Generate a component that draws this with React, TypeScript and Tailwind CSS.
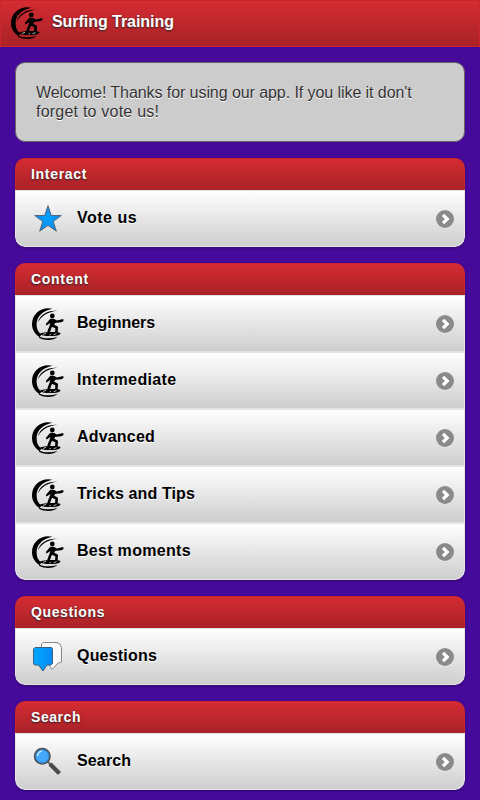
import React from "react";

const SurferIcon = () => (
  <svg viewBox="0 0 32 32" className="w-8 h-8 shrink-0" fill="#000">
    {/* wave */}
    <path d="M20.500 .8C10 -1.800 0 5.500 0 16c0 6 3.200 10.500 7.500 13l2-2.300C6.300 24.500 4.600 21 4.600 16.500 4.600 8.500 10.500 3 20.500 .8z" />
    <path d="M25.500 2.800C15.500 2 8 6.500 5.800 14.500 9.500 8 15.500 4 25.500 2.800z" />
    <path d="M7 28.500c5 2.400 12 2.300 18.500.6-4 3.500-12.500 3.900-18.500.6z" />
    {/* board */}
    <path d="M7.500 25.800c3-2 17.500-2.700 21-.8.300 2.700-6 3.200-11 3.100-4.300 0-8.500-.6-10-2.300z" />
    <path d="M11 26.500l3-1.200M21.500 26.800l3-1.200M17.500 27l1.500-.6" stroke="#ddd" strokeWidth=".8" />
    {/* rider */}
    <circle cx="20.300" cy="8" r="2.400" />
    <path d="M18.300 10.800l4 .2 2.500 1.400 6.400-1.300.4 1.800-2.300 1.400-5 .4-1.200.3-1.800 3.800-3.800-.3.800-3.400-3.700 2.300-.8-1.400z" />
    <path
      d="M19.500 17.200l-1.700 3.300-1.500 4.500M20 17.300l4.700 2.200-.4 5.500"
      fill="none"
      stroke="#000"
      strokeWidth="2.600"
      strokeLinejoin="round"
    />
  </svg>
);

const StarIcon = () => (
  <svg viewBox="0 0 32 32" className="w-8 h-8 shrink-0">
    <defs>
      <radialGradient id="star">
        <stop offset="0" stopColor="#00a2ff" />
        <stop offset="1" stopColor="#168bed" />
      </radialGradient>
    </defs>
    <path
      d="M16 2.700l3.300 9.800h10l-8.100 6.100 3.200 9.600-8.400-5.900-8.300 5.900 3.100-9.600-8.100-6.100h10z"
      fill="url(#star)"
      stroke="#4c5d6c"
      strokeWidth=".9"
    />
  </svg>
);

const ChatIcon = () => (
  <svg viewBox="0 0 32 32" className="w-8 h-8 shrink-0" strokeWidth="1">
    <defs>
      <linearGradient id="chat">
        <stop offset="0" stopColor="#00a8ff" />
        <stop offset="1" stopColor="#0789f4" />
      </linearGradient>
    </defs>
    <path
      d="M11 1.500h14q4 1 4.500 5v14.500l-4 1.500-5.500 6-3.500-5.500h-6l-1-2v-18z"
      fill="#f9f9f9"
      stroke="#888"
    />
    <path
      d="M3 6.500h16.500l1 1.500v14.500l-1.500 1.500h-4l-4 6-4.500-6h-4l-1-1.500v-14.500z"
      fill="url(#chat)"
      stroke="#39607e"
    />
  </svg>
);

const SearchIcon = () => (
  <svg viewBox="0 0 32 32" className="w-8 h-8 shrink-0">
    <path d="M14.500 14.500l4.500 4.500" stroke="#666" strokeWidth="2" />
    <path d="M18 18l9.500 9.500" stroke="#4b4b4b" strokeWidth="4.200" />
    <circle cx="10.300" cy="10.300" r="7.700" fill="#43a8fb" stroke="#4b5055" strokeWidth="1.600" />
    <circle cx="10.300" cy="10.300" r="6.500" fill="none" stroke="#2a83d3" strokeWidth=".8" />
    <path d="M5.500 10c.2-2.700 2-4.500 4.500-5" stroke="#c5e6ff" strokeWidth="1.500" fill="none" />
  </svg>
);

const ArrowIcon = () => (
  <svg viewBox="0 0 20 20" className="w-5 h-5 shrink-0">
    <circle cx="10" cy="10.600" r="9" fill="#fff" fillOpacity=".5" />
    <circle cx="10" cy="10" r="9" fill="#8a8a8a" />
    <path d="M8 5.800l4.200 4.200-4.200 4.200" fill="none" stroke="#fff" strokeWidth="3.300" />
  </svg>
);

const sections = [
  {
    title: "Interact",
    spacing: "tracking-[0.7px]",
    items: [{ label: "Vote us", Icon: StarIcon, spacing: "tracking-[0.5px]" }],
  },
  {
    title: "Content",
    spacing: "tracking-[0.7px]",
    items: [
      { label: "Beginners", Icon: SurferIcon, spacing: "tracking-[0px]" },
      { label: "Intermediate", Icon: SurferIcon, spacing: "tracking-[0.37px]" },
      { label: "Advanced", Icon: SurferIcon, spacing: "tracking-[0.18px]" },
      { label: "Tricks and Tips", Icon: SurferIcon, spacing: "tracking-[0.12px]" },
      { label: "Best moments", Icon: SurferIcon, spacing: "tracking-[0.3px]" },
    ],
  },
  {
    title: "Questions",
    spacing: "tracking-[0.63px]",
    items: [{ label: "Questions", Icon: ChatIcon, spacing: "tracking-[0.2px]" }],
  },
  {
    title: "Search",
    spacing: "tracking-[0.55px]",
    items: [{ label: "Search", Icon: SearchIcon, spacing: "tracking-[0.15px]" }],
  },
];

const Section = ({ title, spacing, items }) => (
  <section className="rounded-[10px] overflow-hidden shadow-[0_1px_3px_rgba(0,0,0,0.3)]">
    <h2
      className={`h-8 pl-[15px] text-sm leading-[30px] font-bold text-white bg-linear-to-b from-[#d42c32] to-[#a92227] [text-shadow:0_1px_2px_#222] border border-b-0 border-[#c8262c] ${spacing}`}
    >
      {title}
    </h2>
    <ul className="border-x border-[#e6e6e6] rounded-b-[10px] bg-[#e6e6e6]">
      {items.map(({ label, Icon, spacing }) => (
        <li
          key={label}
          className="flex items-center h-[57px] pl-4 pr-[9px] border-y border-[#e4e4e4] bg-linear-to-b from-white to-[#cecece] last:rounded-b-[10px]"
        >
          <Icon />
          <span
            className={`flex-1 ml-[13px] pb-px text-base font-bold text-black [text-shadow:0_1px_0_#fff] ${spacing}`}
          >
            {label}
          </span>
          <ArrowIcon />
        </li>
      ))}
    </ul>
  </section>
);

const App = () => {
  return (
    <div className="w-full h-[800px] overflow-hidden bg-[#460a9b] font-['Liberation_Sans',Arial,sans-serif]">
      <header className="flex items-center h-[47px] pl-[10px] pb-px border border-[#c9252b] bg-linear-to-b from-[#d42c32] to-[#a92227]">
        <SurferIcon />
        <h1 className="ml-[9px] pb-[3px] text-base font-bold tracking-[-0.05px] text-white [text-shadow:0_1px_2px_#222]">
          Surfing Training
        </h1>
      </header>
      <main className="flex flex-col gap-4 px-[15px] pt-[15px]">
        <p className="h-20 rounded-[10px] border border-[#666] bg-[#ccc] px-5 pt-5 text-base leading-[19px] text-[#333] [text-shadow:0_1px_0_#fff]">
          <span className="tracking-[-0.07px]">
            Welcome! Thanks for using our app. If you like it don't{" "}
          </span>
          <span className="tracking-[0.22px]">forget to vote us!</span>
        </p>
        {sections.map((section) => (
          <Section key={section.title} {...section} />
        ))}
      </main>
    </div>
  );
};

export default App;
